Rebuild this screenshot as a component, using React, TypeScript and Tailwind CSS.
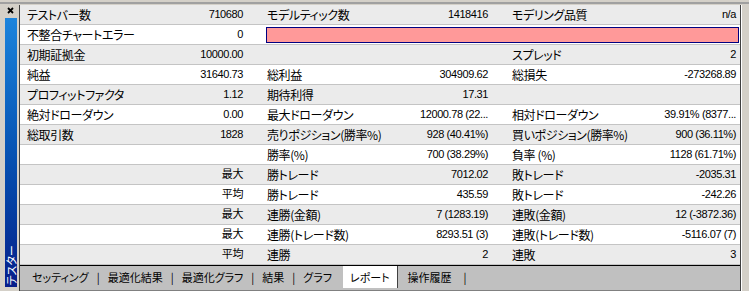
import React from 'react';

type Cell = [string, string] | null;

const rows: { a: Cell; b?: Cell; c?: Cell; pink?: boolean }[] = [
  { a: ['テストバー数', '710680'], b: ['モデルティック数', '1418416'], c: ['モデリング品質', 'n/a'] },
  { a: ['不整合チャートエラー', '0'], pink: true },
  { a: ['初期証拠金', '10000.00'], b: null, c: ['スプレッド', '2'] },
  { a: ['純益', '31640.73'], b: ['総利益', '304909.62'], c: ['総損失', '-273268.89'] },
  { a: ['プロフィットファクタ', '1.12'], b: ['期待利得', '17.31'], c: null },
  { a: ['絶対ドローダウン', '0.00'], b: ['最大ドローダウン', '12000.78 (22...'], c: ['相対ドローダウン', '39.91% (8377...'] },
  { a: ['総取引数', '1828'], b: ['売りポジション(勝率%)', '928 (40.41%)'], c: ['買いポジション(勝率%)', '900 (36.11%)'] },
  { a: null, b: ['勝率(%)', '700 (38.29%)'], c: ['負率 (%)', '1128 (61.71%)'] },
  { a: ['', '最大'], b: ['勝トレード', '7012.02'], c: ['敗トレード', '-2035.31'] },
  { a: ['', '平均'], b: ['勝トレード', '435.59'], c: ['敗トレード', '-242.26'] },
  { a: ['', '最大'], b: ['連勝(金額)', '7 (1283.19)'], c: ['連敗(金額)', '12 (-3872.36)'] },
  { a: ['', '最大'], b: ['連勝(トレード数)', '8293.51 (3)'], c: ['連敗(トレード数)', '-5116.07 (7)'] },
  { a: ['', '平均'], b: ['連勝', '2'], c: ['連敗', '3'] },
];

const jp = "font-['Noto_Sans_CJK_JP',sans-serif] [font-feature-settings:'palt']";
const num = "font-['Liberation_Sans','Noto_Sans_CJK_JP',sans-serif] text-[11px] tracking-[-0.4px] [font-feature-settings:'palt']";

function Group({ cell, w, pl }: { cell?: Cell; w: string; pl: string }) {
  return (
    <div className={`${w} ${pl} pr-[4px] flex items-center justify-between overflow-hidden`}>
      {cell && (
        <>
          <span className={`${jp} text-[12px] tracking-[-0.4px] whitespace-nowrap`}>{cell[0]}</span>
          <span className={`${num} whitespace-nowrap`}>{cell[1]}</span>
        </>
      )}
    </div>
  );
}

export default function App() {
  return (
    <div className="w-[749px] h-[291px] bg-[#d4d0c8] flex flex-col overflow-hidden text-black leading-none">
      {/* top frame */}
      <div className="h-[5px] shrink-0 pt-[2px]">
        <div className="h-[2px] bg-[#a0a0a0]" />
      </div>

      <div className="flex flex-1 min-h-0">
        {/* side bar */}
        <div className="w-[19px] shrink-0 flex flex-col items-start pl-[5px]">
          <svg className="mt-[2px] ml-[2px]" width="7" height="7" viewBox="0 0 7 7">
            <path d="M1 1L6 6M6 1L1 6" stroke="#000" strokeWidth="1.8" />
          </svg>
          <div className="mt-[4px] w-[12px] h-[269px] bg-gradient-to-b from-[#1c84dc] to-[#081e8a] flex items-end justify-center pb-[2px]">
            <span className={`${jp} text-[11px] text-white [writing-mode:vertical-rl] [text-orientation:sideways] rotate-180`}>
              テスター
            </span>
          </div>
        </div>

        {/* main panel */}
        <div className="w-[722px] shrink-0 border-l border-r border-[#404040] bg-white flex flex-col">
          {rows.map((r, i) => (
            <div
              key={i}
              className={`h-[20px] shrink-0 flex border-b border-[#c4c4c4] ${i % 2 === 0 ? 'bg-[#ebebeb]' : 'bg-white'}`}
            >
              <Group cell={r.a} w="w-[227px]" pl="pl-[7px]" />
              {r.pink ? (
                <div className="flex-1 pl-[19px] pr-[1px] pt-[2px] pb-[1px]">
                  <div className="h-full bg-[#ff9999] border border-[#000080]" />
                </div>
              ) : (
                <>
                  <Group cell={r.b} w="w-[245px]" pl="pl-[20px]" />
                  <Group cell={r.c} w="flex-1" pl="pl-[20px]" />
                </>
              )}
            </div>
          ))}

          {/* tab bar */}
          <div className="flex-1 bg-[#c0c0c0] border-t border-black border-b border-b-[#808080] flex items-start pl-[12px]">
            <div className={`${jp} text-[11px] flex items-center h-[22px]`}>
              <span>セッティング</span>
              <span className="mx-[8px]">|</span>
              <span>最適化結果</span>
              <span className="mx-[8px]">|</span>
              <span>最適化グラフ</span>
              <span className="mx-[8px]">|</span>
              <span>結果</span>
              <span className="mx-[8px]">|</span>
              <span>グラフ</span>
              <span className="ml-[11px] h-[22px] px-[7px] bg-white border-r border-[#404040] flex items-center">レポート</span>
              <span className="ml-[10px]">操作履歴</span>
              <span className="mx-[12px]">|</span>
            </div>
          </div>
        </div>

        {/* right frame */}
        <div className="flex-1 border-l border-white" />
      </div>
    </div>
  );
}
